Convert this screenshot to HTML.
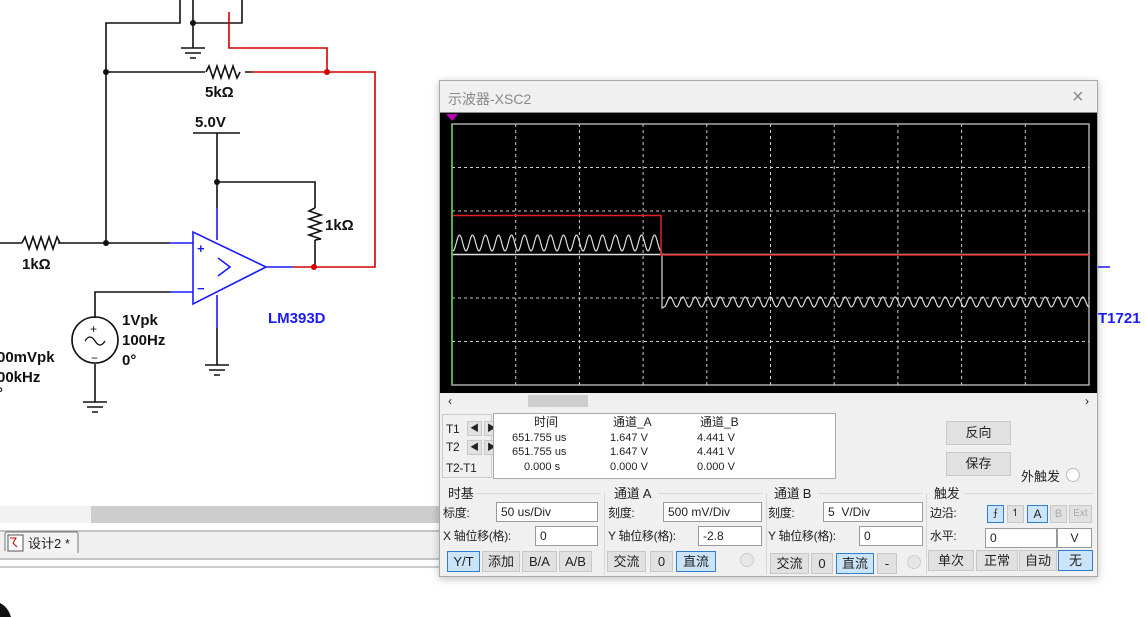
<!DOCTYPE html>
<html><head><meta charset="utf-8"><style>
*{box-sizing:border-box;margin:0;padding:0}
body{width:1146px;height:617px;background:#fff;position:relative;overflow:hidden;font-family:"Liberation Sans","Noto Sans CJK SC",sans-serif;font-size:12px;color:#222}
.a{position:absolute;white-space:nowrap}
.win{position:absolute;left:439px;top:80px;width:659px;height:497px;background:#f0f0f0;border:1px solid #aaa;box-shadow:0 2px 8px rgba(0,0,0,.25)}
.inp{position:absolute;background:#fff;border:1px solid #999;height:20px;padding:2px 4px;font-size:12px;line-height:15px}
.btn{position:absolute;background:#e1e1e1;border:1px solid #c8c8c8;height:21px;text-align:center;line-height:19px;font-size:13px}
.on{background:#cce4f7;border-color:#2e7fd0}
.gl{position:absolute;border-top:1px solid #d8d8d8}
.vl{position:absolute;border-left:1px solid #d8d8d8}
.lb{position:absolute;white-space:nowrap;font-size:12px;line-height:14px;letter-spacing:-0.3px}
.tb div{line-height:13px}
</style></head><body>
<svg class="a" style="left:0;top:0" width="1146" height="617">
<g stroke="#111" stroke-width="1.6" fill="none">
<path d="M180 0V23H106V243M193 0V48M193 23H242V0M106 72H205M245 72H252"/>
<path d="M206 72l3-6 4 12 4-12 4 12 4-12 4 12 4-12 4 12 3-6"/>
<path d="M193 133H240M217 133V208M217 182H315V208M315 240V267"/>
<path d="M315 208l-6 3 12 4-12 4 12 4-12 4 12 4-12 4 12 4-6 1"/>
<path d="M0 243H22M58 243H170M22 243l3-6 4 12 4-12 4 12 4-12 4 12 4-12 4 12 4-12 3 6"/>
<path d="M170 292H95V318M95 364V402M217 328V365"/>
<circle cx="95" cy="340" r="23"/>
<path d="M85 341q5-8 10 0t10 0" stroke-width="1.3"/>
<path d="M181 48h24M185 53h16M190 58h6M83 402h24M87 407h16M92 412h6M205 365h24M209 370h16M214 375h6"/>
</g>
<g fill="#111"><circle cx="106" cy="72" r="3"/><circle cx="193" cy="23" r="3"/><circle cx="106" cy="243" r="3"/><circle cx="217" cy="182" r="3"/></g>
<g stroke="#d20000" stroke-width="1.6" fill="none"><path d="M229 12V48H327V72M252 72H375V267H293"/></g>
<g fill="#d20000"><circle cx="327" cy="72" r="3"/><circle cx="314" cy="267" r="3"/></g>
<g stroke="#1a1aff" stroke-width="1.6" fill="none"><path d="M193 232V304L266 267Z M266 267H293 M170 243H193 M170 292H193 M217 208V240 M217 295V328 M218 258L230 267 218 276 M1098 267H1110"/></g>
<g fill="#111" font-weight="bold" font-size="15" font-family="Liberation Sans,sans-serif">
<text x="205" y="97">5kΩ</text><text x="195" y="127">5.0V</text><text x="325" y="230">1kΩ</text><text x="22" y="269">1kΩ</text>
<text x="122" y="325">1Vpk</text><text x="122" y="345">100Hz</text><text x="122" y="365">0°</text>
<text x="-3" y="362">00mVpk</text><text x="-3" y="382">00kHz</text><text x="-3" y="398">°</text>
</g>
<text x="90" y="333" font-size="12" fill="#111">+</text><text x="91" y="362" font-size="12" fill="#111">−</text>
<text x="197" y="253" fill="#1a1aff" font-size="13" font-weight="bold">+</text><text x="197" y="293" fill="#1a1aff" font-size="13" font-weight="bold">−</text>
<text x="268" y="323" fill="#1a1aff" font-size="15" font-weight="bold" font-family="Liberation Sans,sans-serif">LM393D</text>
<text x="1098" y="323" fill="#1a1aff" font-size="15" font-weight="bold" font-family="Liberation Sans,sans-serif">T1721</text>
<rect x="0" y="506" width="91" height="17" fill="#f2f2f2"/><rect x="91" y="506" width="350" height="17" fill="#cdcdcd"/>
<rect x="0" y="530" width="440" height="30" fill="#f0f0f0"/>
<path d="M0 531H440M0 559H440M0 567H440" stroke="#999"/>
<path d="M5 551V534q0-2 2-2H76q2 0 2 2V553" stroke="#777" fill="#f4f4f4"/>
<rect x="8" y="535" width="15" height="16" fill="#fff" stroke="#555"/><path d="M10 538l6 0 -3 5 4 4" stroke="#c00" fill="none"/>
<text x="28" y="548" font-size="13" fill="#222">设计2 *</text>
<path d="M0 603q8 4 11 14H0Z" fill="#111"/>
</svg>

<div class="win">
<div class="a" style="left:8px;top:8px;font-size:14px;color:#888">示波器-XSC2</div>
<div class="a" style="left:632px;top:5px;font-size:20px;color:#888">×</div>
<div class="a" style="left:0;top:31px;width:657px;height:281px;background:#000;border-top:1px solid #888"></div>
<svg class="a" style="left:0;top:31px" width="657" height="282">
<rect x="12" y="12" width="637" height="261" fill="none" stroke="#aaa" stroke-width="1.5"/>
<g stroke="#ccc" stroke-dasharray="3 3" stroke-width="1">
<path d="M75.7 12V273M139.4 12V273M203.1 12V273M266.8 12V273M330.5 12V273M394.2 12V273M457.9 12V273M521.6 12V273M585.3 12V273"/>
<path d="M12 55.5H649M12 99H649M12 186H649M12 229.5H649"/>
</g>
<path d="M12 142.5H649" stroke="#ddd" stroke-width="1.5"/>
<path d="M12 12V273" stroke="#5c5" stroke-width="1.5"/>
<path d="M6 2h12l-6 7z" fill="#b0b"/>
<path id="ta" stroke="#ddd" stroke-width="1.2" fill="none"/>
<path d="M13 103.5H221V143H649" stroke="#d22" stroke-width="1.5" fill="none"/>
</svg>
<div class="a" style="left:8px;top:313px;font-size:12px">‹</div><div class="a" style="left:645px;top:313px;font-size:12px">›</div>
<div class="a" style="left:88px;top:314px;width:60px;height:12px;background:#cdcdcd"></div>

<div class="a" style="left:2px;top:333px;width:50px;height:64px;border:1px solid #ccc"></div>
<div class="lb" style="left:6px;top:341px">T1</div><div class="lb" style="left:6px;top:359px">T2</div><div class="lb" style="left:6px;top:380px">T2-T1</div>
<div class="btn" style="left:27px;top:340px;width:15px;height:15px;font-size:9px;line-height:13px">◀</div><div class="btn" style="left:44px;top:340px;width:15px;height:15px;font-size:9px;line-height:13px">▶</div>
<div class="btn" style="left:27px;top:359px;width:15px;height:15px;font-size:9px;line-height:13px">◀</div><div class="btn" style="left:44px;top:359px;width:15px;height:15px;font-size:9px;line-height:13px">▶</div>
<div class="a tb" style="left:53px;top:332px;width:343px;height:66px;background:#fff;border:1px solid #aaa;font-size:11px">
<div class="a" style="left:40px;top:1px;font-size:12px;line-height:14px">时间</div><div class="a" style="left:119px;top:1px;font-size:12px;line-height:14px">通道_A</div><div class="a" style="left:206px;top:1px;font-size:12px;line-height:14px">通道_B</div>
<div class="a" style="left:18px;top:18px">651.755 us</div><div class="a" style="left:116px;top:18px">1.647 V</div><div class="a" style="left:203px;top:18px">4.441 V</div>
<div class="a" style="left:18px;top:32px">651.755 us</div><div class="a" style="left:116px;top:32px">1.647 V</div><div class="a" style="left:203px;top:32px">4.441 V</div>
<div class="a" style="left:30px;top:47px">0.000 s</div><div class="a" style="left:116px;top:47px">0.000 V</div><div class="a" style="left:203px;top:47px">0.000 V</div>
</div>
<div class="btn" style="left:506px;top:340px;width:65px;height:24px;line-height:22px">反向</div>
<div class="btn" style="left:506px;top:371px;width:65px;height:24px;line-height:22px">保存</div>
<div class="a" style="left:581px;top:385px;font-size:13px">外触发</div>
<div class="a" style="left:626px;top:387px;width:14px;height:14px;border-radius:50%;border:1px solid #bbb;background:#fff"></div>

<div class="lb" style="left:8px;top:406px;font-size:13px">时基</div>
<div class="lb" style="left:174px;top:406px;font-size:13px">通道 A</div>
<div class="lb" style="left:334px;top:406px;font-size:13px">通道 B</div>
<div class="lb" style="left:494px;top:406px;font-size:13px">触发</div>
<div class="gl" style="left:36px;top:412px;width:124px"></div><div class="gl" style="left:218px;top:412px;width:104px"></div><div class="gl" style="left:378px;top:412px;width:104px"></div><div class="gl" style="left:524px;top:412px;width:130px"></div>
<div class="vl" style="left:164px;top:412px;height:82px"></div><div class="vl" style="left:326px;top:412px;height:82px"></div><div class="vl" style="left:486px;top:412px;height:82px"></div>

<div class="lb" style="left:3px;top:425px">标度:</div><div class="inp" style="left:56px;top:421px;width:102px">50 us/Div</div>
<div class="lb" style="left:3px;top:448px">X 轴位移(格):</div><div class="inp" style="left:95px;top:445px;width:63px">0</div>
<div class="btn on" style="left:7px;top:470px;width:33px">Y/T</div><div class="btn" style="left:42px;top:470px;width:38px">添加</div><div class="btn" style="left:82px;top:470px;width:35px">B/A</div><div class="btn" style="left:119px;top:470px;width:33px">A/B</div>

<div class="lb" style="left:168px;top:425px">刻度:</div><div class="inp" style="left:223px;top:421px;width:99px">500 mV/Div</div>
<div class="lb" style="left:168px;top:448px">Y 轴位移(格):</div><div class="inp" style="left:258px;top:445px;width:64px">-2.8</div>
<div class="btn" style="left:167px;top:470px;width:39px">交流</div><div class="btn" style="left:210px;top:470px;width:23px">0</div><div class="btn on" style="left:236px;top:470px;width:40px">直流</div>
<div class="a" style="left:300px;top:472px;width:14px;height:14px;border-radius:50%;border:1px solid #ccc;background:#e6e6e6"></div>

<div class="lb" style="left:328px;top:425px">刻度:</div><div class="inp" style="left:383px;top:421px;width:100px">5 &nbsp;V/Div</div>
<div class="lb" style="left:328px;top:448px">Y 轴位移(格):</div><div class="inp" style="left:419px;top:445px;width:64px">0</div>
<div class="btn" style="left:330px;top:472px;width:39px">交流</div><div class="btn" style="left:371px;top:472px;width:22px">0</div><div class="btn on" style="left:396px;top:472px;width:38px">直流</div><div class="btn" style="left:437px;top:472px;width:20px">-</div>
<div class="a" style="left:467px;top:474px;width:14px;height:14px;border-radius:50%;border:1px solid #ccc;background:#e6e6e6"></div>

<div class="lb" style="left:490px;top:425px">边沿:</div>
<div class="btn on" style="left:547px;top:424px;width:17px;height:18px;font-size:10px;line-height:16px">⨍</div><div class="btn" style="left:567px;top:424px;width:17px;height:18px;font-size:10px;line-height:16px">↿</div>
<div class="btn on" style="left:587px;top:424px;width:21px;height:18px;line-height:16px;font-size:12px">A</div><div class="btn" style="left:610px;top:424px;width:17px;height:18px;line-height:16px;font-size:11px;color:#aaa">B</div><div class="btn" style="left:629px;top:424px;width:23px;height:18px;line-height:16px;font-size:10px;color:#aaa">Ext</div>
<div class="lb" style="left:490px;top:448px">水平:</div><div class="inp" style="left:545px;top:447px;width:72px">0</div><div class="inp" style="left:617px;top:447px;width:35px;text-align:center">V</div>
<div class="btn" style="left:488px;top:469px;width:46px">单次</div><div class="btn" style="left:536px;top:469px;width:42px">正常</div><div class="btn" style="left:579px;top:469px;width:38px">自动</div><div class="btn on" style="left:618px;top:469px;width:35px">无</div>
</div>
<script>
(function(){var d="",x,y;
for(x=13;x<=221;x+=1){y=131+8*Math.cos((x-13)/13*2*Math.PI);d+=(x==13?"M":"L")+x+" "+y.toFixed(1);}
d+="L222 143L222 196";
for(x=224;x<=649;x+=1){y=190+5*Math.cos((x-224)/12.5*2*Math.PI);d+="L"+x+" "+y.toFixed(1);}
document.getElementById("ta").setAttribute("d",d);})();
</script>
</body></html>
